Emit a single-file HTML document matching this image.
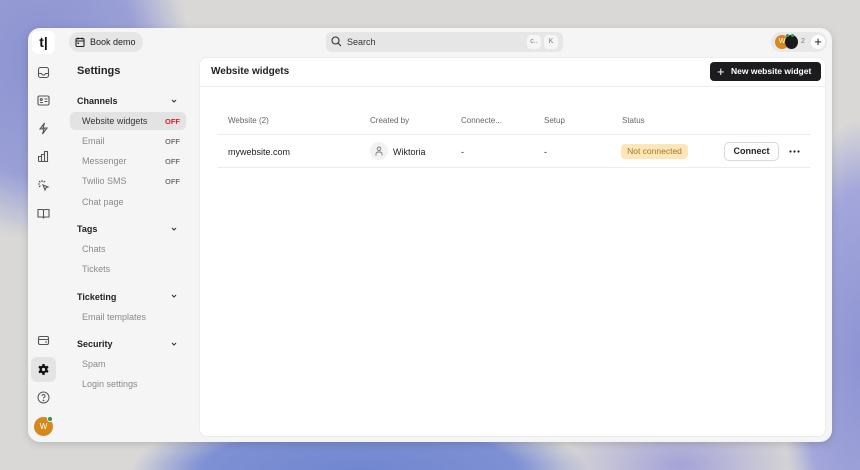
<!DOCTYPE html>
<html><head><style>
*{box-sizing:border-box;margin:0;padding:0}
body{width:860px;height:470px;overflow:hidden;font-family:"Liberation Sans",sans-serif;position:relative;background:#d8d8d6}
.bg{position:absolute;inset:0;background:
radial-gradient(ellipse 150px 180px at 40px 60px,#8a92d0 0%,#9aa0d6 65%,rgba(160,165,215,0) 100%),
radial-gradient(ellipse 230px 70px at 360px 475px,#6f86cf 0%,#7f90d4 70%,rgba(130,145,215,0) 100%),
radial-gradient(ellipse 80px 240px at 860px 360px,#8e94d4 0%,#a2a6da 70%,rgba(160,165,215,0) 100%),
radial-gradient(ellipse 120px 60px at 680px 465px,#a4a2d8 0%,rgba(170,168,220,0) 100%),
#d9d8d6}
.win{position:absolute;left:28px;top:28px;width:804px;height:414px;background:#f5f5f5;border-radius:12px;box-shadow:0 2px 8px rgba(0,0,0,.15)}
.main{position:absolute;left:199px;top:57px;width:627px;height:380px;background:#fff;border-radius:8px;border:1px solid #ececec}
.abs{position:absolute}
.ic{position:absolute;left:37px;width:13px;height:13px}
.nav{position:absolute;left:82px;font-size:9px;color:#8a8a8a}
.off{position:absolute;left:165px;font-size:7.5px;color:#777;font-weight:bold}
.sec{position:absolute;left:77px;font-size:9px;font-weight:bold;color:#222}
.chev{position:absolute;left:170px;width:8px;height:8px}
.th{position:absolute;top:116px;font-size:8px;color:#666}
.td{position:absolute;top:147px;font-size:9px;color:#222}
</style></head><body>
<div class="bg"></div>
<div class="win"></div>
<div class="abs" style="left:32px;top:31px;width:23px;height:23px;background:#fff;border-radius:6px;font-weight:bold;font-size:14px;color:#111;text-align:center;line-height:23px">t|</div>
<div class="abs" style="left:69px;top:32px;width:74px;height:20px;background:#e6e6e6;border-radius:10px;font-size:9px;color:#222;line-height:20px;padding-left:21px">Book demo</div>
<svg class="abs" style="left:75px;top:37px" width="10" height="10" viewBox="0 0 10 10" fill="none" stroke="#222" stroke-width="1.1"><rect x="1" y="1.5" width="8" height="8" rx="1"/><path d="M1 4h8M3 0.5v2M7 0.5v2"/><rect x="2.5" y="5.5" width="1.5" height="1.5" fill="#222" stroke="none"/></svg>
<div class="abs" style="left:326px;top:32px;width:237px;height:20px;background:#e6e6e6;border-radius:6px;font-size:9px;color:#333;line-height:20px;padding-left:21px">Search</div>
<svg class="abs" style="left:331px;top:36px" width="11" height="11" viewBox="0 0 11 11" fill="none" stroke="#333" stroke-width="1.1"><circle cx="4.5" cy="4.5" r="3.5"/><path d="M7 7l3 3"/></svg>
<div class="abs" style="left:527px;top:35px;width:14px;height:14px;background:#f5f5f5;border-radius:4px;font-size:7px;color:#777;text-align:center;line-height:14px">c..</div>
<div class="abs" style="left:544px;top:35px;width:14px;height:14px;background:#f5f5f5;border-radius:4px;font-size:7px;color:#777;text-align:center;line-height:14px">K</div>
<div class="abs" style="left:771px;top:32px;width:56px;height:20px;background:#e8e8e8;border-radius:10px"></div>
<div class="abs" style="left:775px;top:35px;width:14px;height:14px;background:#d4881e;border-radius:50%;color:#fff;font-size:7px;text-align:center;line-height:14px">W</div>
<div class="abs" style="left:785px;top:35px;width:13px;height:14px;background:#1a1a1a;border-radius:50%"></div>
<div class="abs" style="left:786px;top:34px;width:3px;height:3px;background:#2a9d5a;border-radius:50%"></div>
<div class="abs" style="left:791px;top:34px;width:3px;height:3px;background:#2a9d5a;border-radius:50%"></div>
<div class="abs" style="left:801px;top:38px;font-size:7px;color:#777">2</div>
<div class="abs" style="left:811px;top:35px;width:14px;height:14px;background:#fff;border-radius:50%;font-size:13px;color:#111;text-align:center;line-height:14px">+</div>
<svg class="ic" style="top:66px" viewBox="0 0 13 13" fill="none" stroke="#555" stroke-width="1.1"><rect x="1.5" y="1.5" width="10" height="10" rx="2"/><path d="M1.5 7.5h3l1 1.5h2l1-1.5h3"/></svg>
<svg class="ic" style="top:94px" viewBox="0 0 13 13" fill="none" stroke="#555" stroke-width="1.1"><rect x="1" y="2" width="11" height="9" rx="1.5"/><circle cx="4.3" cy="5.5" r="1"/><path d="M3 8.5h3M7.5 5h3M7.5 7.5h3"/></svg>
<svg class="ic" style="top:122px" viewBox="0 0 13 13" fill="none" stroke="#555" stroke-width="1.1"><path d="M7.5 1L3 7h4l-1.5 5L10 6H6z"/></svg>
<svg class="ic" style="top:150px" viewBox="0 0 13 13" fill="none" stroke="#555" stroke-width="1.1"><path d="M1.5 11.5v-5h3v5M4.5 11.5v-7h3v7M7.5 11.5v-10h3v10h-9"/></svg>
<svg class="ic" style="top:179px" viewBox="0 0 13 13" fill="none" stroke="#555" stroke-width="1.1"><path d="M6 6l5 2-2 .8L8 11z"/><path d="M5 1v2M1 5h2M2 2l1.4 1.4M8 2L6.6 3.4M2 8l1.4-1.4"/></svg>
<svg class="ic" style="top:207px" viewBox="0 0 13 13" fill="none" stroke="#555" stroke-width="1.1"><path d="M1 2.5h4a1.5 1.5 0 0 1 1.5 1.5v7.5A1.5 1.5 0 0 0 5 10H1zM12 2.5H8A1.5 1.5 0 0 0 6.5 4v7.5A1.5 1.5 0 0 1 8 10h4z"/></svg>
<svg class="ic" style="top:334px" viewBox="0 0 13 13" fill="none" stroke="#555" stroke-width="1.1"><rect x="1.5" y="2.5" width="10" height="8" rx="1.5"/><path d="M1.5 5.5h10M8 8h2"/></svg>
<div class="abs" style="left:31px;top:357px;width:25px;height:25px;background:#e3e3e3;border-radius:6px"></div>
<svg class="ic" style="top:363px" viewBox="0 0 13 13"><path fill="#111" d="M5.5 1h2l.3 1.6 1.3.7 1.5-.6 1 1.7-1.2 1.1v1.5l1.2 1.1-1 1.7-1.5-.6-1.3.7L7.5 12h-2l-.3-1.6-1.3-.7-1.5.6-1-1.7 1.2-1.1V5.5L1.4 4.4l1-1.7 1.5.6 1.3-.7z"/><circle cx="6.5" cy="6.5" r="1.6" fill="#e3e3e3"/></svg>
<svg class="ic" style="top:391px" viewBox="0 0 13 13" fill="none" stroke="#555" stroke-width="1"><circle cx="6.5" cy="6.5" r="5.5"/><path d="M5 5a1.5 1.5 0 1 1 2 1.4c-.5.2-.5.6-.5 1.1"/><circle cx="6.5" cy="9.5" r=".4" fill="#555"/></svg>
<div class="abs" style="left:34px;top:417px;width:19px;height:19px;background:#d4881e;border-radius:50%;color:#fff;font-size:8px;text-align:center;line-height:19px">W</div>
<div class="abs" style="left:47px;top:416px;width:6px;height:6px;background:#1e9a4a;border-radius:50%;border:1px solid #f5f5f5"></div>
<div class="abs" style="left:77px;top:65px;font-size:11px;font-weight:bold;color:#222">Settings</div>
<div class="sec" style="top:96px">Channels</div>
<div class="abs" style="left:70px;top:112px;width:116px;height:18px;background:#e3e3e3;border-radius:5px"></div>
<div class="nav" style="top:116px;color:#333">Website widgets</div><div class="off" style="top:117px;color:#d0242b">OFF</div>
<div class="nav" style="top:136px">Email</div><div class="off" style="top:137px">OFF</div>
<div class="nav" style="top:156px">Messenger</div><div class="off" style="top:157px">OFF</div>
<div class="nav" style="top:176px">Twilio SMS</div><div class="off" style="top:177px">OFF</div>
<div class="nav" style="top:197px">Chat page</div>
<div class="sec" style="top:224px">Tags</div>
<div class="nav" style="top:244px">Chats</div>
<div class="nav" style="top:264px">Tickets</div>
<div class="sec" style="top:292px">Ticketing</div>
<div class="nav" style="top:312px">Email templates</div>
<div class="sec" style="top:339px">Security</div>
<div class="nav" style="top:359px">Spam</div>
<div class="nav" style="top:379px">Login settings</div>
<svg class="chev" style="top:97px" viewBox="0 0 8 8" fill="none" stroke="#333" stroke-width="1.1"><path d="M2 3l2 2 2-2"/></svg>
<svg class="chev" style="top:225px" viewBox="0 0 8 8" fill="none" stroke="#333" stroke-width="1.1"><path d="M2 3l2 2 2-2"/></svg>
<svg class="chev" style="top:292px" viewBox="0 0 8 8" fill="none" stroke="#333" stroke-width="1.1"><path d="M2 3l2 2 2-2"/></svg>
<svg class="chev" style="top:340px" viewBox="0 0 8 8" fill="none" stroke="#333" stroke-width="1.1"><path d="M2 3l2 2 2-2"/></svg>
<div class="main"></div>
<div class="abs" style="left:199px;top:86px;width:627px;height:1px;background:#ececec"></div>
<div class="abs" style="left:211px;top:66px;font-size:10px;font-weight:bold;color:#222">Website widgets</div>
<div class="abs" style="left:710px;top:62px;width:111px;height:19px;background:#1c1c1e;border-radius:4px;color:#fff;font-size:8.5px;font-weight:bold;line-height:19px;padding-left:21px">New website widget</div>
<div class="abs" style="left:717px;top:63px;color:#fff;font-size:13px;line-height:17px">+</div>
<div class="th" style="left:228px">Website (2)</div>
<div class="th" style="left:370px">Created by</div>
<div class="th" style="left:461px">Connecte...</div>
<div class="th" style="left:544px">Setup</div>
<div class="th" style="left:622px">Status</div>
<div class="abs" style="left:217px;top:134px;width:593px;height:1px;background:#ececec"></div>
<div class="abs" style="left:217px;top:167px;width:593px;height:1px;background:#ececec"></div>
<div class="td" style="left:228px">mywebsite.com</div>
<div class="abs" style="left:370px;top:142px;width:18px;height:18px;background:#f2f2f2;border-radius:50%"></div>
<svg class="abs" style="left:375px;top:146px" width="8" height="10" viewBox="0 0 8 10" fill="none" stroke="#777" stroke-width=".9"><circle cx="4" cy="2.8" r="1.8"/><path d="M1 9.5V8a2 2 0 0 1 2-2h2a2 2 0 0 1 2 2v1.5"/></svg>
<div class="td" style="left:393px">Wiktoria</div>
<div class="td" style="left:461px">-</div>
<div class="td" style="left:544px">-</div>
<div class="abs" style="left:621px;top:144px;width:67px;height:15px;background:#fde7b8;border-radius:4px;font-size:8.5px;color:#a0782a;text-align:center;line-height:15px">Not connected</div>
<div class="abs" style="left:724px;top:142px;width:55px;height:19px;border:1px solid #d8d8d8;border-radius:5px;background:#fff;font-size:9px;font-weight:bold;color:#222;text-align:center;line-height:17px">Connect</div>
<svg class="abs" style="left:789px;top:150px" width="11" height="3" viewBox="0 0 11 3" fill="#222"><circle cx="1.5" cy="1.5" r="1.1"/><circle cx="5.5" cy="1.5" r="1.1"/><circle cx="9.5" cy="1.5" r="1.1"/></svg>
</body></html>
